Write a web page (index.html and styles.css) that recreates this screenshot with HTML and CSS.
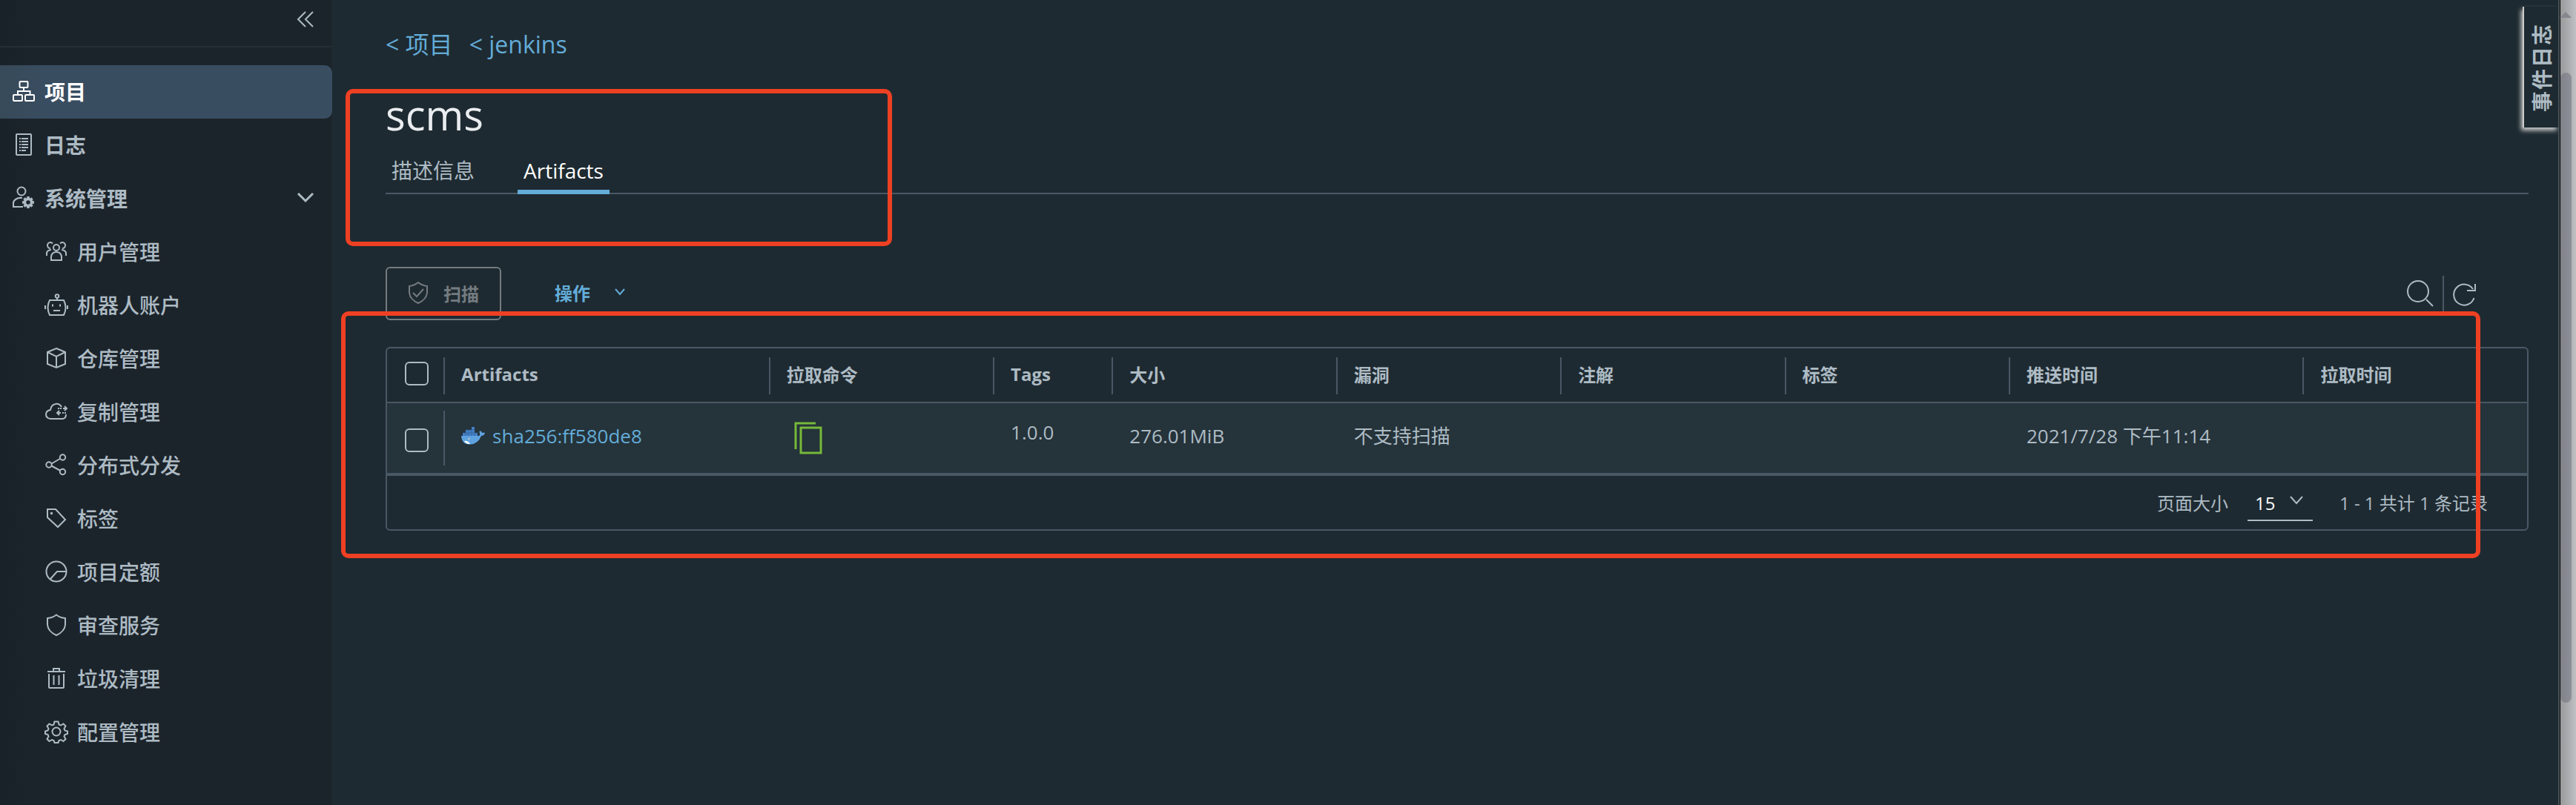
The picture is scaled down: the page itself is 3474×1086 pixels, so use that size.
FILE: index.html
```html
<!DOCTYPE html>
<html lang="zh-CN">
<head>
    <meta charset="UTF-8">
    <meta name="viewport" content="width=device-width, initial-scale=1.0">
    <title>Harbor</title>
    <link rel="stylesheet" href="styles.css">
</head>
<body>

<nav class="sidebar">
    <div class="sidebar-top">
        <button class="collapse" aria-label="collapse">
            <svg width="24" height="24" viewBox="0 0 24 24"><path d="M12 2L2 12l10 10M22 2L12 12l10 10"/></svg>
        </button>
    </div>
    <div class="menu">
        <a href="#" class="item active">
            <svg class="icon" viewBox="0 0 32 32"><rect x="10.500" y="3" width="11" height="8" rx="1"/><rect x="2" y="21" width="12" height="8" rx="1"/><rect x="18" y="21" width="12" height="8" rx="1"/><path d="M16 11v5M8 21v-5h16.500v5"/></svg>
            项目
        </a>
        <a href="#" class="item">
            <svg class="icon" viewBox="0 0 32 32"><rect x="6" y="2" width="20" height="28" rx="1"/><path d="M13 8h9M13 12h9M13 16h9M13 20h9M13 24h6M10 8h2M10 12h2M10 16h2M10 20h2M10 24h2"/></svg>
            日志
        </a>
        <button class="item group">
            <svg class="icon" viewBox="0 0 32 32"><circle cx="13" cy="7" r="5.500"/><path d="M15 28H2v-6q3-7 12-6"/><circle cx="22" cy="22" r="4.500" stroke-width="3.500"/><path d="M22 14v3M22 27v3M14 22h3M27 22h3M16.500 16.500l2 2M25.500 25.500l2 2M16.500 27.500l2-2M25.500 18.500l2-2" stroke-width="3.500"/></svg>
            系统管理
            <svg class="caret" width="24" height="24" viewBox="0 0 24 24"><path d="M2 6l10 10L22 6"/></svg>
        </button>
        <a href="#" class="item sub">
            <svg class="icon" viewBox="0 0 32 32"><circle cx="16" cy="11" r="4"/><path d="M9 28v-5q1-6 7-6t7 6v5zM11 5.500a4 4 0 1 0-3 6.500M21 5.500a4 4 0 1 1 3 6.500M3 22v-4q1-3.500 6-4M29 22v-4q-1-3.500-6-4"/></svg>
            用户管理
        </a>
        <a href="#" class="item sub">
            <svg class="icon" viewBox="0 0 32 32"><circle cx="17" cy="4.500" r="2.300"/><path d="M17 7v3M7 10h19q5 10 0 20H7Q2 20 7 10zM12 24h9M1 17v5M31 17v5M11 15.500v3M21 15.500v3"/></svg>
            机器人账户
        </a>
        <a href="#" class="item sub">
            <svg class="icon" viewBox="0 0 32 32"><path d="M16 3l12 5v16l-12 5-12-5V8zM4 8l12 6 12-6M16 14v15"/></svg>
            仓库管理
        </a>
        <a href="#" class="item sub">
            <svg class="icon" viewBox="0 0 32 32"><path d="M23 10q-3-5-8-4-6 1-7 8-6 1-6 6t6 6h17q4-1 4-6M25 12h5M27 9l3 3-3 3M17 18h5M20 15l-3 3 3 3"/><path d="M18 12h6M24 18h6" stroke-dasharray="2 1"/></svg>
            复制管理
        </a>
        <a href="#" class="item sub">
            <svg class="icon" viewBox="0 0 32 32"><circle cx="6" cy="16" r="3.700"/><circle cx="24.500" cy="6" r="3.700"/><circle cx="24.500" cy="25.500" r="3.700"/><path d="M9.500 14.500l12-7M9.500 17.500l12 6.500"/></svg>
            分布式分发
        </a>
        <a href="#" class="item sub">
            <svg class="icon" viewBox="0 0 32 32"><path d="M4 4h11l13 14-10 10L4 15z"/><circle cx="9.500" cy="9.500" r=".8"/></svg>
            标签
        </a>
        <a href="#" class="item sub">
            <svg class="icon" viewBox="0 0 32 32"><circle cx="16" cy="16" r="13.500"/><path d="M29 16H17l-9 10"/></svg>
            项目定额
        </a>
        <a href="#" class="item sub">
            <svg class="icon" viewBox="0 0 32 32"><path d="M16 2.500q5 4 12 4.500v9q-1 9-12 14Q5 25 4 16V7q7-.5 12-4.500z"/></svg>
            审查服务
        </a>
        <a href="#" class="item sub">
            <svg class="icon" viewBox="0 0 32 32"><path d="M4 7h24M12 7V3h8v4M6 10v18q0 1 1 1h18q1 0 1-1V10M12.500 12v13M19.500 12v13"/></svg>
            垃圾清理
        </a>
        <a href="#" class="item sub">
            <svg class="icon" viewBox="0 0 32 32"><circle cx="16" cy="16" r="5.500"/><path d="M13.500 2.500h5l1 4 2.500 1 3.500-2 3 3-2 3.500 1 2.500 3.500 1v3.500l-3.500 1-1 2.500 2 3.500-3 3-3.500-2-2.500 1-1 3h-5l-1-3-2.500-1-3.500 2-3-3 2-3.500-1-2.500-3.500-1v-3.500l3.500-1 1-2.500-2-3.500 3-3 3.500 2 2.500-1z"/></svg>
            配置管理
        </a>
    </div>
</nav>

<main class="content">
    <div class="breadcrumb">
        <a href="#">&lt; 项目</a>
        <a href="#">&lt; jenkins</a>
    </div>
    <h1>scms</h1>
    <div class="tabs">
        <button class="tab">描述信息</button>
        <button class="tab selected">Artifacts</button>
    </div>

    <div class="toolbar">
        <button class="scan" disabled>
            <svg width="28" height="32" viewBox="0 0 28 32"><path d="M14 2q5 4 12 5v9q-1 9-12 14Q3 25 2 16V7q7-1 12-5zM7 16l5 5 9-10"/></svg>
            扫描
        </button>
        <button class="actions">
            操作
            <svg width="16" height="16" viewBox="0 0 16 16"><path d="M2 4l6 7 6-7"/></svg>
        </button>
        <div class="tools">
            <button aria-label="search">
                <svg width="36" height="36" viewBox="0 0 36 36"><circle cx="15" cy="15" r="14"/><path d="M26 26l9 9"/></svg>
            </button>
            <span class="divider"></span>
            <button aria-label="refresh">
                <svg width="32" height="36" viewBox="0 0 32 36"><path d="M28.500 24A14 14 0 1 1 27 12M30 5v9h-11"/></svg>
            </button>
        </div>
    </div>

    <div class="datagrid">
        <table>
            <colgroup>
                <col class="w-check"><col class="w-name"><col class="w-mid"><col class="w-tags"><col class="w-mid">
                <col class="w-mid"><col class="w-mid"><col class="w-mid"><col class="w-push"><col class="w-mid">
            </colgroup>
            <thead>
                <tr>
                    <th><input type="checkbox" aria-label="select all"></th>
                    <th>Artifacts</th>
                    <th>拉取命令</th>
                    <th>Tags</th>
                    <th>大小</th>
                    <th>漏洞</th>
                    <th>注解</th>
                    <th>标签</th>
                    <th>推送时间</th>
                    <th>拉取时间</th>
                </tr>
            </thead>
            <tbody>
                <tr>
                    <td class="check"><input type="checkbox" aria-label="select row"></td>
                    <td class="name">
                        <a href="#">
                            <svg width="32" height="24" viewBox="0 0 32 24">
                                <path fill="#4480c4" d="M2 8h4v4H2zM6 4h8v8H6zM14 0h4v12h-4zM18 8h4v4h-4z"/>
                                <path fill="#5ea3e0" d="M0 12h24q2-1 1-3-1-2 0-4 3 1 3 3 2-1 4 0-1 4-5 4-4 11-15 11.500Q1 24 0 12z"/>
                                <path stroke="#2c5a94" stroke-width=".6" d="M6 4v8M10 4v8M14 4v8M18 8v4M2 8h20M6 4h12"/>
                                <path fill="#fff" d="M4 19q5-1 8 4-6 0-8-4z"/>
                                <circle cx="10.500" cy="16" r="1.500" fill="#a9bccb"/>
                            </svg>
                            sha256:ff580de8
                        </a>
                    </td>
                    <td class="pull">
                        <button class="copy" aria-label="copy">
                            <svg width="38" height="44" viewBox="0 0 38 44"><path d="M2 37V2h27M9 8h27v34H9z"/></svg>
                        </button>
                    </td>
                    <td class="tags">1.0.0</td>
                    <td>276.01MiB</td>
                    <td>不支持扫描</td>
                    <td></td>
                    <td></td>
                    <td>2021/7/28 下午11:14</td>
                    <td></td>
                </tr>
            </tbody>
        </table>
        <div class="footer">
            <label for="pageSize">页面大小</label>
            <div class="select">
                <select id="pageSize">
                    <option>15</option>
                    <option>25</option>
                    <option>50</option>
                </select>
                <svg width="20" height="20" viewBox="0 0 20 20"><path d="M2 5l8 9 8-9"/></svg>
            </div>
            <span>1 - 1 共计 1 条记录</span>
        </div>
    </div>

    <button class="event-log">事件日志</button>

    <div class="mark mark-title"></div>
    <div class="mark mark-grid"></div>
</main>

<div class="scrollbar">
    <div class="arrow"></div>
    <div class="thumb"></div>
</div>

</body>
</html>
```
FILE: styles.css
```css
* {
    box-sizing: border-box;
}

body {
    margin: 0;
    min-height: 100vh;
    display: flex;
    background-color: #1e2a31;
    color: #adbbc4;
    font-family: "Open Sans", "Noto Sans CJK SC", sans-serif;
    font-size: 26px;
    overflow: hidden;
}

a {
    color: #63acd8;
    text-decoration: none;
}

button {
    background: none;
    border: none;
    padding: 0;
    color: inherit;
    font-family: inherit;
    cursor: pointer;
}

svg {
    display: block;
    flex: none;
    fill: none;
    stroke: currentColor;
    stroke-width: 2;
}

/* sidebar */
.sidebar {
    flex: none;
    width: 448px;
    background: linear-gradient(to right, #1a2229, #1c242b 42px);
}

.sidebar-top {
    height: 64px;
    padding: 14px 24px 0;
    border-bottom: 2px solid #252d36;
    display: flex;
    justify-content: flex-end;
    align-items: flex-start;
}

.menu {
    padding-top: 24px;
}

.item {
    display: flex;
    align-items: center;
    gap: 12px;
    width: 100%;
    height: 72px;
    padding: 0 24px 2px 16px;
    color: #adbbc4;
    font-size: 28px;
    font-weight: bold;
}

.item.sub {
    padding-left: 60px;
    font-weight: 500;
}

.item.active {
    background: linear-gradient(to right, #364a59, #394d60 56px);
    border-radius: 0 10px 10px 0;
    color: #fff;
}

.icon {
    width: 32px;
    height: 32px;
}

.caret {
    margin-left: auto;
    stroke-width: 3;
}

/* page */
.content {
    position: relative;
    flex: 1;
    min-width: 0;
    padding: 40px 40px 0 72px;
}

.breadcrumb {
    display: flex;
    gap: 22px;
    font-size: 32px;
    line-height: 40px;
}

h1 {
    margin: 38px 0 0;
    color: #eaedf0;
    font-size: 56px;
    font-weight: normal;
    line-height: 72px;
}

.tabs {
    display: flex;
    gap: 50px;
    margin-top: 20px;
    box-shadow: inset 0 -2px 0 #495865;
}

.tab {
    padding: 0 8px 6px;
    border-bottom: 6px solid transparent;
    font-size: 28px;
    line-height: 40px;
}

.tab.selected {
    border-bottom-color: #63acd8;
    color: #fff;
    font-weight: 500;
}

.toolbar {
    display: flex;
    align-items: center;
    height: 72px;
    margin-top: 98px;
    padding-right: 70px;
}

.scan,
.actions {
    display: flex;
    align-items: center;
    padding-bottom: 4px;
    font-size: 24px;
    font-weight: 600;
}

.scan {
    height: 72px;
    gap: 20px;
    padding: 0 28px 2px;
    border: 2px solid #747b80;
    border-radius: 6px;
    color: #747b80;
    cursor: default;
}

.actions {
    gap: 32px;
    margin-left: 72px;
    color: #63acd8;
}

.tools {
    display: flex;
    align-items: center;
    gap: 12px;
    margin-left: auto;
}

.divider {
    width: 2px;
    height: 48px;
    background-color: #495865;
}

/* datagrid */
.datagrid {
    margin-top: 36px;
    border: 2px solid #495865;
    border-radius: 6px;
}

table {
    width: 100%;
    table-layout: fixed;
    border-collapse: separate;
    border-spacing: 0;
}

.w-check {
    width: 76px;
}

.w-name {
    width: 438px;
}

.w-mid {
    width: 302px;
}

.w-tags {
    width: 160px;
}

.w-push {
    width: 396px;
}

th,
td {
    padding: 0 0 0 24px;
    text-align: left;
}

th {
    height: 74px;
    padding-bottom: 4px;
    border-bottom: 2px solid #495865;
    font-size: 24px;
    font-weight: bold;
}

th + th {
    background: linear-gradient(#495865, #495865) no-repeat 0 12px / 2px 50px;
}

td {
    height: 94px;
    padding-top: 26px;
    background-color: #25333a;
    line-height: 36px;
    vertical-align: top;
}

.check,
.pull {
    padding-top: 0;
    vertical-align: middle;
}

.check {
    padding-top: 6px;
}

.name {
    background-image: linear-gradient(#495865, #495865);
    background-repeat: no-repeat;
    background-position: 0 10px;
    background-size: 2px 74px;
}

.name a {
    display: flex;
    align-items: center;
    gap: 10px;
}

.name svg {
    stroke: none;
}

.tags {
    padding-top: 21px;
}

.copy {
    display: block;
    padding-left: 10px;
    color: #77b83a;
}

.copy svg {
    stroke-width: 3;
}

input[type="checkbox"] {
    appearance: none;
    display: block;
    width: 32px;
    height: 32px;
    margin: 0;
    border: 2px solid #adbbc4;
    border-radius: 6px;
}

.footer {
    display: flex;
    justify-content: flex-end;
    align-items: center;
    height: 76px;
    padding: 0 53px 2px 0;
    border-top: 4px solid #495865;
    font-size: 24px;
}

.select {
    position: relative;
    margin: 0 36px 0 26px;
}

.select select {
    appearance: none;
    display: block;
    width: 88px;
    height: 52px;
    padding: 4px 0 0 10px;
    background: none;
    border: none;
    border-bottom: 2px solid #adbbc4;
    border-radius: 0;
    color: #fff;
    font-family: inherit;
    font-size: 24px;
}

.select svg {
    position: absolute;
    top: 14px;
    right: 12px;
    pointer-events: none;
}

/* side tab, text runs bottom to top */
.event-log {
    position: absolute;
    top: 9px;
    right: 0;
    width: 48px;
    height: 163px;
    border-right: 2px solid #ccc;
    background-color: #1e2a31;
    box-shadow: 2px -4px 6px #ccc;
    font-size: 28px;
    font-weight: bold;
    letter-spacing: 2px;
    writing-mode: vertical-rl;
    text-orientation: sideways;
    transform: rotate(180deg);
}

.mark {
    position: absolute;
    border: 6px solid #ee4023;
    border-radius: 10px;
    pointer-events: none;
}

.mark-title {
    top: 120px;
    left: 18px;
    width: 737px;
    height: 212px;
}

.mark-grid {
    top: 420px;
    left: 12px;
    right: 105px;
    height: 333px;
}

.scrollbar {
    position: relative;
    flex: none;
    display: flex;
    flex-direction: column;
    width: 24px;
    padding: 16px 6px 138px 0;
    background: linear-gradient(to right, #000 1px, #98999b 1px, #bfc0c3);
    background-origin: padding-box;
    border-left: 2px solid #4a5459;
}

.arrow {
    border: 8px solid transparent;
    border-top: none;
    border-bottom-color: #85878f;
}

.thumb {
    flex: 1;
    margin: 74px 0 0 1px;
    border-radius: 8px;
    background: linear-gradient(to right, #7f8289, #8e9099);
}
```
